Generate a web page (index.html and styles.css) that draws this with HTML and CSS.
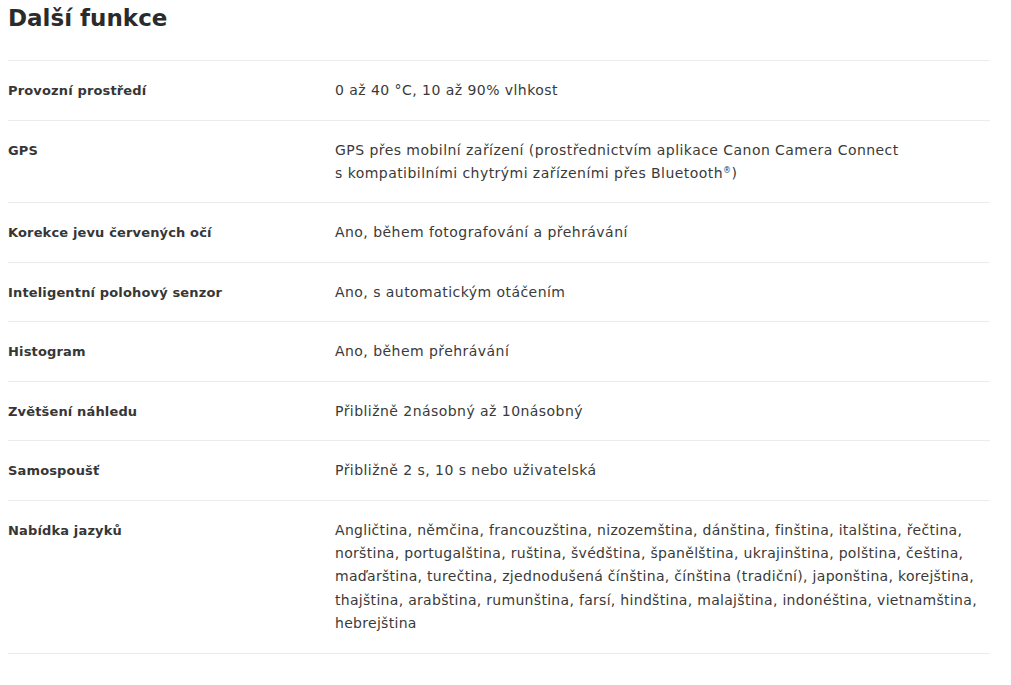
FILE: index.html
```html
<!DOCTYPE html>
<html lang="cs">
<head>
<meta charset="utf-8">
<title>Další funkce</title>
<link rel="stylesheet" href="styles.css">
</head>
<body>
<section class="specs">
  <h2 class="specs-title">Další funkce</h2>
  <div class="spec-list">
    <div class="spec-row">
      <div class="spec-label">Provozní prostředí</div>
      <div class="spec-value">0 až 40 °C, 10 až 90% vlhkost</div>
    </div>
    <div class="spec-row">
      <div class="spec-label">GPS</div>
      <div class="spec-value">GPS přes mobilní zařízení (prostřednictvím aplikace Canon Camera Connect<br>s kompatibilními chytrými zařízeními přes Bluetooth<sup>®</sup>)</div>
    </div>
    <div class="spec-row">
      <div class="spec-label">Korekce jevu červených očí</div>
      <div class="spec-value">Ano, během fotografování a přehrávání</div>
    </div>
    <div class="spec-row">
      <div class="spec-label">Inteligentní polohový senzor</div>
      <div class="spec-value">Ano, s automatickým otáčením</div>
    </div>
    <div class="spec-row">
      <div class="spec-label">Histogram</div>
      <div class="spec-value">Ano, během přehrávání</div>
    </div>
    <div class="spec-row">
      <div class="spec-label">Zvětšení náhledu</div>
      <div class="spec-value">Přibližně 2násobný až 10násobný</div>
    </div>
    <div class="spec-row">
      <div class="spec-label">Samospoušť</div>
      <div class="spec-value">Přibližně 2 s, 10 s nebo uživatelská</div>
    </div>
    <div class="spec-row">
      <div class="spec-label">Nabídka jazyků</div>
      <div class="spec-value spec-value--long">Angličtina, němčina, francouzština, nizozemština, dánština, finština, italština, řečtina, norština, portugalština, ruština, švédština, španělština, ukrajinština, polština, čeština, maďarština, turečtina, zjednodušená čínština, čínština (tradiční), japonština, korejština, thajština, arabština, rumunština, farsí, hindština, malajština, indonéština, vietnamština, hebrejština</div>
    </div>
  </div>
</section>
</body>
</html>
```

FILE: styles.css
```css
html, body {
  margin: 0;
  padding: 0;
  background: #ffffff;
}

body {
  font-family: "DejaVu Sans", "Noto Sans", sans-serif;
  color: #333333;
}

.specs {
  width: 982px;
  padding: 0 0 0 8px;
}

.specs-title {
  margin: 0;
  padding: 2px 0 0 0;
  height: 60px;
  box-sizing: border-box;
  font-size: 23px;
  font-weight: 700;
  line-height: 32px;
  color: #2b2b2b;
}

.spec-list {
  border-top: 1px solid #ececec;
}

.spec-row {
  display: flex;
  padding: 18px 0 17.5px;
  border-bottom: 1px solid #ececec;
  line-height: 23px;
}

.spec-label {
  flex: 0 0 327px;
  font-size: 13px;
  font-weight: 700;
  letter-spacing: 0.15px;
  color: #363636;
}

.spec-value {
  flex: 1 1 auto;
  font-size: 14px;
  letter-spacing: 0.45px;
  color: #3a3a3a;
}

.spec-value sup {
  font-size: 8px;
  line-height: 0;
  vertical-align: 5px;
}

.spec-value--long {
  line-height: 23.4px;
  letter-spacing: 0.3px;
}
```
